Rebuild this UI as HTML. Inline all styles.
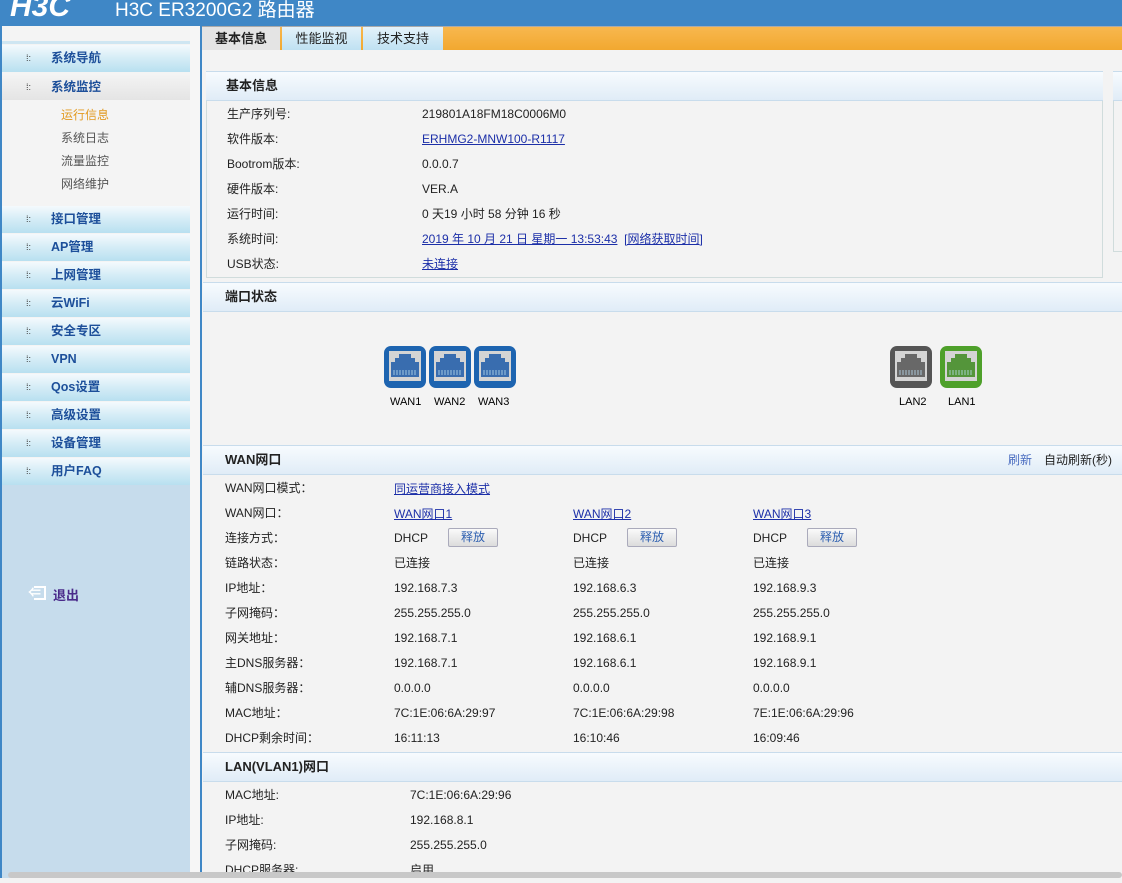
<!DOCTYPE html>
<html><head><meta charset="utf-8"><style>
*{margin:0;padding:0;box-sizing:border-box}
body{width:1122px;height:878px;overflow:hidden;background:#f3f3f3;font-family:"Liberation Sans","Noto Sans CJK SC",sans-serif;font-size:12px;color:#222;position:relative}
.a{position:absolute;white-space:nowrap;line-height:14px}
#hdr{left:0;top:0;width:1122px;height:26px;background:#3f87c6;color:#fff;font-size:19px}
.it{height:27px;background:linear-gradient(#f4fafd,#d4ecf6 50%,#b8e0f0);color:#1d4f9a;font-weight:bold;font-size:12.5px;line-height:27px;padding-left:49px;position:absolute;left:2px;width:188px}
.it:before{content:"⁞:";position:absolute;left:24px;color:#333;font-size:9px;font-weight:normal}
.sub{color:#555;position:absolute;left:61px;font-size:12px}
.hd{background:linear-gradient(#f7fbfe,#e0ecf7);border-top:1px solid #c8dcec;border-bottom:1px solid #c8dcec;height:30px;font-weight:bold;font-size:13px;line-height:28px;padding-left:22px;position:absolute}
a{color:#1c2fa8;text-decoration:underline}
.btn{position:absolute;width:50px;height:19px;border:1px solid #aab;background:linear-gradient(#fafafa,#dcdcdc);color:#2d5fb0;text-align:center;line-height:17px;font-size:12px;border-radius:2px}
.col{line-height:25px!important}
</style></head><body>
<div class="a" id="hdr"><span class="a" style="left:10px;top:-8px;font-size:30px;line-height:30px;font-weight:bold;font-style:italic">H3C</span><span class="a" style="left:115px;top:0;font-size:19px;line-height:22px">H3C ER3200G2 路由器</span></div>
<div class="a" style="left:0;top:26px;width:2px;height:852px;background:#3f87c6"></div>
<div class="a" style="left:2px;top:26px;width:188px;height:852px;background:#f4f4f4"></div>
<div class="a" style="left:2px;top:484px;width:188px;height:394px;background:#c6dcec"></div>
<div class="a" style="left:2px;top:41px;width:188px;height:3px;background:#cfe6f2"></div>
<div class="a" style="left:190px;top:26px;width:10px;height:852px;background:#f6f6f6"></div>
<div class="a" style="left:200px;top:26px;width:2px;height:852px;background:#3f87c6"></div>
<div class="it" style="top:45px">系统导航</div>
<div class="it" style="top:74px;background:linear-gradient(#f4f4f4,#e4e4e4);height:26px;line-height:26px">系统监控</div>
<div class="sub" style="top:106px;color:#e29a20">运行信息</div>
<div class="sub" style="top:129px">系统日志</div>
<div class="sub" style="top:152px">流量监控</div>
<div class="sub" style="top:175px">网络维护</div>
<div class="it" style="top:206px">接口管理</div>
<div class="it" style="top:234px">AP管理</div>
<div class="it" style="top:262px">上网管理</div>
<div class="it" style="top:290px">云WiFi</div>
<div class="it" style="top:318px">安全专区</div>
<div class="it" style="top:346px">VPN</div>
<div class="it" style="top:374px">Qos设置</div>
<div class="it" style="top:402px">高级设置</div>
<div class="it" style="top:430px">设备管理</div>
<div class="it" style="top:458px">用户FAQ</div>
<div class="a" style="left:34px;top:586px;width:12px;height:14px;border:2px solid #fff;border-left:none"></div>
<div class="a" style="left:28px;top:586px;color:#fff;font-size:13px;font-weight:bold">⇐</div>
<div class="a" style="left:53px;top:589px;color:#4a2a8a;font-size:13px;font-weight:bold">退出</div>
<!-- tabs -->
<div class="a" style="left:202px;top:26px;width:920px;height:24px;background:linear-gradient(#f8b850,#f2a830)"></div>
<div class="a" style="left:202px;top:26px;width:920px;height:1px;background:#aaa"></div>
<div class="a" style="left:202px;top:27px;width:78px;height:23px;background:#e4e4e4;font-weight:bold;font-size:13px;line-height:23px;text-align:center">基本信息</div>
<div class="a" style="left:282px;top:27px;width:79px;height:23px;background:linear-gradient(#e4f2fa,#bfe1f2);font-size:13px;line-height:23px;text-align:center">性能监视</div>
<div class="a" style="left:363px;top:27px;width:80px;height:23px;background:linear-gradient(#e4f2fa,#bfe1f2);font-size:13px;line-height:23px;text-align:center">技术支持</div>
<!-- basic info -->
<div class="a" style="left:206px;top:71px;width:897px;height:207px;border:1px solid #d0dcdc"></div>
<div class="a" style="left:1113px;top:71px;width:9px;height:181px;border:1px solid #d0dcdc;border-right:none"></div>
<div class="hd" style="left:206px;top:71px;width:897px;padding-left:20px">基本信息</div>
<div class="hd" style="left:1113px;top:71px;width:9px;padding:0"></div>
<div class="a col" style="left:227px;top:102px">生产序列号:<br>软件版本:<br>Bootrom版本:<br>硬件版本:<br>运行时间:<br>系统时间:<br>USB状态:</div>
<div class="a col" style="left:422px;top:102px">219801A18FM18C0006M0<br><a>ERHMG2-MNW100-R1117</a><br>0.0.0.7<br>VER.A<br>0 天19 小时 58 分钟 16 秒<br><a>2019 年 10 月 21 日 星期一 13:53:43</a>&nbsp;&nbsp;<a>[网络获取时间]</a><br><a>未连接</a></div>
<!-- ports -->
<div class="hd" style="left:203px;top:282px;width:919px">端口状态</div>
<svg class="a" style="left:380px;top:344px" width="610" height="70" font-family="Liberation Sans" font-size="11">
<defs><g id="p"><rect x="2" y="2" width="42" height="42" rx="7"/><rect x="7" y="7" width="32" height="30" fill="#d4d4d4"/><path d="M17 10h12v4h4v4h4v15H9V18h4v-4h4z" fill="currentColor" opacity=".85"/><path d="M12 26v5M15 26v5M18 26v5M21 26v5M24 26v5M27 26v5M30 26v5M33 26v5" stroke="#bde" stroke-width=".8"/></g></defs>
<g fill="#1d64b0" color="#1d5aa8"><use href="#p" x="2"/><use href="#p" x="47"/><use href="#p" x="92"/></g>
<g fill="#555" color="#555"><use href="#p" x="508"/></g><g fill="#4ea02a" color="#3d8a1e"><use href="#p" x="558"/></g>
<text x="10" y="61">WAN1</text><text x="54" y="61">WAN2</text><text x="98" y="61">WAN3</text><text x="519" y="61">LAN2</text><text x="568" y="61">LAN1</text></svg>
<!-- WAN -->
<div class="hd" style="left:203px;top:445px;width:919px">WAN网口</div>
<div class="a" style="left:1008px;top:453px;color:#4a6cc0">刷新</div><div class="a" style="left:1044px;top:453px">自动刷新(秒)</div>
<div class="a col" style="left:225px;top:476px">WAN网口模式：<br>WAN网口：<br>连接方式：<br>链路状态：<br>IP地址：<br>子网掩码：<br>网关地址：<br>主DNS服务器：<br>辅DNS服务器：<br>MAC地址：<br>DHCP剩余时间：</div>
<div class="a" style="left:394px;top:482px"><a>同运营商接入模式</a></div>
<div class="a" style="left:394px;top:507px"><a>WAN网口1</a></div><div class="a" style="left:573px;top:507px"><a>WAN网口2</a></div><div class="a" style="left:753px;top:507px"><a>WAN网口3</a></div>
<div class="a" style="left:394px;top:531px">DHCP</div><div class="btn" style="left:448px;top:528px">释放</div>
<div class="a" style="left:573px;top:531px">DHCP</div><div class="btn" style="left:627px;top:528px">释放</div>
<div class="a" style="left:753px;top:531px">DHCP</div><div class="btn" style="left:807px;top:528px">释放</div>
<div class="a col" style="left:394px;top:551px">已连接<br>192.168.7.3<br>255.255.255.0<br>192.168.7.1<br>192.168.7.1<br>0.0.0.0<br>7C:1E:06:6A:29:97<br>16:11:13</div>
<div class="a col" style="left:573px;top:551px">已连接<br>192.168.6.3<br>255.255.255.0<br>192.168.6.1<br>192.168.6.1<br>0.0.0.0<br>7C:1E:06:6A:29:98<br>16:10:46</div>
<div class="a col" style="left:753px;top:551px">已连接<br>192.168.9.3<br>255.255.255.0<br>192.168.9.1<br>192.168.9.1<br>0.0.0.0<br>7E:1E:06:6A:29:96<br>16:09:46</div>
<!-- LAN -->
<div class="hd" style="left:203px;top:752px;width:919px">LAN(VLAN1)网口</div>
<div class="a col" style="left:225px;top:783px">MAC地址:<br>IP地址:<br>子网掩码:<br>DHCP服务器:</div>
<div class="a col" style="left:410px;top:783px">7C:1E:06:6A:29:96<br>192.168.8.1<br>255.255.255.0<br>启用</div>
<div class="a" style="left:8px;top:872px;width:1114px;height:6px;background:#c8c8c8;border-radius:3px"></div>
</body></html>
